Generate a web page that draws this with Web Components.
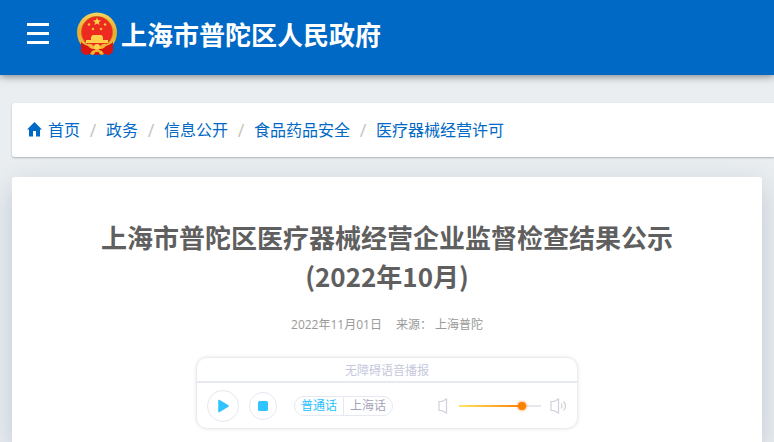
<!DOCTYPE html>
<html lang="zh-CN">
<head>
<meta charset="utf-8">
<meta name="viewport" content="width=device-width, initial-scale=1">
<title>上海市普陀区人民政府</title>
<style>
html{height:100%}
body{margin:0;min-height:100%;display:flex;flex-direction:column;background:#eaeef1;
 font-family:"Open Sans","Noto Sans CJK SC",sans-serif;color:#5f5f5f}
</style>
</head>
<body>
<site-header>上海市普陀区人民政府</site-header>
<crumb-bar>
  <crumb-item home>首页</crumb-item>
  <crumb-item>政务</crumb-item>
  <crumb-item>信息公开</crumb-item>
  <crumb-item>食品药品安全</crumb-item>
  <crumb-item>医疗器械经营许可</crumb-item>
</crumb-bar>
<article-card>
  <span slot="title">上海市普陀区医疗器械经营企业监督检查结果公示</span>
  <span slot="period">(2022年10月)</span>
  <span slot="date">2022年11月01日</span>
  <span slot="source">上海普陀</span>
  <voice-player></voice-player>
</article-card>
<script>
const define = (name, html) => customElements.define(name, class extends HTMLElement {
  constructor() {
    super();
    const t = document.createElement('template');
    t.innerHTML = html;
    this.attachShadow({mode: 'open'}).append(t.content.cloneNode(true));
  }
});

define('national-emblem', `
<style>:host{display:block;width:42px;height:44px}svg{display:block;width:100%;height:100%}</style>
<svg viewBox="0 0 42 44" aria-hidden="true">
  <defs><linearGradient id="g" x2="0" y2="1"><stop stop-color="#f6d45c"/><stop offset=".5" stop-color="#e9a92f"/><stop offset="1" stop-color="#f3c544"/></linearGradient></defs>
  <circle cx="21" cy="20.500" r="20" fill="url(#g)"/>
  <circle cx="21" cy="20" r="16" fill="#c77a1e"/>
  <circle cx="21" cy="20" r="15.300" fill="#ec2a20"/>
  <path d="M21 5.500l1.100 2.800 3 .1-2.300 1.800.8 2.900-2.600-1.600-2.600 1.600.8-2.900-2.300-1.800 3-.1z" fill="#ffd34a"/>
  <g fill="#f6bd35"><circle cx="13" cy="12.500" r="1.300"/><circle cx="29" cy="12.500" r="1.300"/><circle cx="17" cy="17" r="1.300"/><circle cx="25" cy="17" r="1.300"/></g>
  <path d="M15 25l1.500-2h9l1.500 2v3H15zM10 28h22v3H10z" fill="#ffd14a"/>
  <path d="M5 30q5 5 12 4l4-1 4 1q7 1 12-4v10l-4 3-5-1-3 1-4-1-4 1-3-1-5 1-4-3z" fill="#d9160f"/>
  <path d="M11 32q4-1 7 2l3 1 3-1q3-3 7-2-2 5-7 5l-3-1-3 1q-5 0-7-5z" fill="#f2b738"/>
  <circle cx="21" cy="35" r="3" fill="#ffd34a"/>
  <path d="M14 42l2-3 5-2 5 2 2 3-3 1-2-2h-4l-2 2z" fill="#f3b52f"/>
  <path d="M19 40h4l-1 3h-2z" fill="#d9160f"/>
</svg>`);

define('site-header', `
<style>
:host{display:flex;align-items:center;height:75px;padding:0 27px;background:#0069c6;
 box-shadow:0 1px 8px rgba(0,0,0,.5);box-sizing:border-box;color:#fff;position:relative}
button{display:flex;flex-direction:column;gap:6px;width:22px;padding:0;border:0;background:none;margin:0 27px 8px 0}
i{display:block;height:3px;width:22px;background:#fff}
national-emblem{margin:0 3px 8px 0}
h1{margin:0 0 6px;font-size:26px;line-height:36px;font-weight:700;white-space:nowrap}
</style>
<button type="button" aria-label="菜单"><i></i><i></i><i></i></button>
<national-emblem></national-emblem>
<h1><slot></slot></h1>`);

define('crumb-bar', `
<style>
:host{display:block;margin:28px 0 0 12px;background:#fff;border-radius:3px 0 0 3px;box-shadow:0 1px 2px rgba(0,0,0,.25)}
nav{display:flex;align-items:center;height:54px;padding:0 15px}
</style>
<nav aria-label="面包屑"><slot></slot></nav>`);

define('crumb-item', `
<style>
:host{display:flex;align-items:center;font-size:16px;line-height:24px;white-space:nowrap}
:host(:not([home]))::before{content:"/";color:#c4c4c4;width:26px;text-align:center;font-size:18px}
a{display:flex;align-items:center;gap:6px;color:#0069c6;text-decoration:none}
svg{display:none;width:15px;height:15px;margin-bottom:2px}
:host([home]) svg{display:block}
</style>
<a href="#"><svg viewBox="0 0 15 15" aria-hidden="true"><path d="M7.500 0 15 7.500H13V14.500H9V9H6V14.500H2V7.500H0z" fill="#0069c6"/></svg><slot></slot></a>`);

define('article-card', `
<style>
:host{display:flex;flex-direction:column;align-items:center;flex:1;margin:20px 12px 0;padding:40px 20px 13px;background:#fff;
 border-radius:3px 3px 0 0;box-shadow:0 10px 30px rgba(60,90,110,.25);box-sizing:border-box}
h2{margin:0;font:700 26px/39px "Noto Sans CJK SC",sans-serif;text-align:center;color:#5f5f5f}
slot[name=period]{display:block}
p{display:flex;margin:21px 0 24px;font-size:12px;line-height:18px;color:#999;gap:14px}
p span{display:flex;gap:3px}
</style>
<h2><slot name="title"></slot><slot name="period"></slot></h2>
<p><slot name="date"></slot><span>来源：<slot name="source"></slot></span></p>
<slot></slot>`);

define('voice-player', `
<style>
:host{display:block;width:380px;max-width:100%;border-radius:10px;background:#fff;box-shadow:0 0 4px rgba(0,0,0,.18)}
header{height:23px;border-bottom:2px solid #e6e8f2;font-size:12px;line-height:26px;text-align:center;color:#c5c8dc}
.row{display:flex;align-items:center;height:45px;padding:1px 10px 0;box-sizing:border-box}
button{font:inherit;padding:0;background:none;border:0;color:#a3a3b8}
.round{display:grid;place-items:center;box-sizing:border-box;border:1px solid #e6e8f2;border-radius:50%;background:#fff}
.play{width:32px;height:32px;margin-right:10px}
.stop{width:28px;height:28px;margin-right:17px}
.langs{display:flex;border:1px solid #e6e8f2;border-radius:10px;height:18px;font-size:12px;line-height:18px;margin-right:45px}
.langs button{width:48px}
.langs button+button{border-left:1px solid #e6e8f2;width:49px}
.langs [aria-pressed=true]{color:#1ec0ff}
svg{display:block}
.vol{margin-right:11px}
input{appearance:none;width:82px;height:14px;margin:0 9px 0 0;background:linear-gradient(90deg,#ffe566,#ff8000 77%,#e6e8ee 77%) center/100% 2px no-repeat}
input::-webkit-slider-thumb{appearance:none;width:8px;height:8px;border-radius:50%;background:#ff8000;box-shadow:0 0 3px #ff8000}
</style>
<header>无障碍语音播报</header>
<div class="row">
  <button type="button" class="round play" aria-label="播放"><svg width="12" height="14" viewBox="0 0 12 14"><path d="M2 1.500 11 7 2 12.500z" fill="#2fc3ff" stroke="#2fc3ff" stroke-width="1.500" stroke-linejoin="round"/></svg></button>
  <button type="button" class="round stop" aria-label="停止"><svg width="10" height="10" viewBox="0 0 10 10"><rect width="10" height="10" rx="1.500" fill="#2fc3ff"/></svg></button>
  <div class="langs" role="group" aria-label="语言"><button type="button" aria-pressed="true">普通话</button><button type="button" aria-pressed="false">上海话</button></div>
  <button type="button" class="vol" aria-label="静音"><svg width="10" height="16" viewBox="0 0 10 16" fill="none" stroke="#cfcfd9" stroke-width="1.200"><path d="M4 3.500H1v9h3l4.500 2.500V1z"/></svg></button>
  <input type="range" min="0" max="100" value="80" aria-label="音量">
  <button type="button" aria-label="最大音量"><svg width="17" height="16" viewBox="0 0 17 16" fill="none" stroke="#cfcfd9" stroke-width="1.200"><path d="M4 3.500H1v9h3l4.500 2.500V1zM11 5.500q2 2.500 0 5M13.500 3.500q4 4.500 0 9"/></svg></button>
</div>`);
</script>
</body>
</html>
